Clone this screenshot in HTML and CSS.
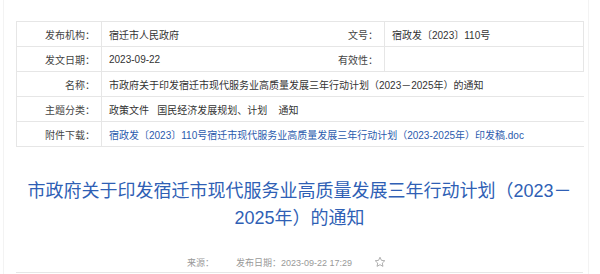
FILE: index.html
```html
<!DOCTYPE html>
<html lang="zh-CN">
<head>
    <meta charset="UTF-8">
    <meta name="viewport" content="width=device-width, initial-scale=1.0">
    <title>市政府关于印发宿迁市现代服务业高质量发展三年行动计划（2023－2025年）的通知</title>
    <link rel="stylesheet" href="styles.css">
</head>
<body>
    <div class="page">
        <table class="info">
            <colgroup>
                <col class="col-label">
                <col class="col-value">
                <col class="col-label2">
                <col class="col-value2">
            </colgroup>
            <tr>
                <th>发布机构：</th>
                <td>宿迁市人民政府</td>
                <th class="side">文号：</th>
                <td>宿政发〔2023〕110号</td>
            </tr>
            <tr>
                <th>发文日期：</th>
                <td>2023-09-22</td>
                <th class="side">有效性：</th>
                <td></td>
            </tr>
            <tr>
                <th>名称：</th>
                <td colspan="3">市政府关于印发宿迁市现代服务业高质量发展三年行动计划（2023－2025年）的通知</td>
            </tr>
            <tr>
                <th>主题分类：</th>
                <td colspan="3">政策文件&nbsp;&nbsp;&nbsp;国民经济发展规划、计划&nbsp;&nbsp;&nbsp;&nbsp;通知</td>
            </tr>
            <tr>
                <th>附件下载：</th>
                <td colspan="3"><a href="#">宿政发〔2023〕110号宿迁市现代服务业高质量发展三年行动计划（2023-2025年）印发稿.doc</a></td>
            </tr>
        </table>

        <h1 class="title">市政府关于印发宿迁市现代服务业高质量发展三年行动计划（2023－2025年）的通知</h1>

        <div class="meta">
            <span class="source">来源：</span>
            <span class="date">发布日期：2023-09-22 17:29</span>
            <svg class="star" width="12" height="12" viewBox="0 0 24 24">
                <path d="M12 2.5l2.9 6.2 6.6.8-4.9 4.6 1.3 6.6L12 17.4l-5.9 3.3 1.3-6.6-4.9-4.6 6.6-.8z" fill="none" stroke="#9a9a9a" stroke-width="1.6" stroke-linejoin="round"/>
            </svg>
        </div>
    </div>
</body>
</html>
```

FILE: styles.css
```css
body {
    margin: 0;
    padding: 0;
    background-color: #fff;
    font-family: "Liberation Sans", "Noto Sans CJK SC", sans-serif;
    color: #333;
}

.page {
    margin-left: 3px;
    width: 586px;
    height: 274px;
    border-left: 1px solid #f3f3f3;
    border-right: 1px solid #f3f3f3;
    padding: 21px 5px 0 12px;
    box-sizing: border-box;
    overflow: hidden;
}

.info {
    width: 568px;
    border-collapse: collapse;
    table-layout: fixed;
    font-size: 10px;
}

.col-label {
    width: 85px;
}

.col-label2 {
    width: 90px;
}

.col-value2 {
    width: 199px;
}

.info th,
.info td {
    height: 24px;
    padding: 0;
    border: 1px solid #e6e6e6;
    white-space: nowrap;
    overflow: hidden;
}

.info th {
    font-weight: normal;
    text-align: right;
    padding-right: 6px;
    color: #444;
}

.info td {
    padding-left: 7px;
    color: #333;
}

.info .side {
    border-left: none;
    padding-right: 6px;
}

.info tr > td:nth-child(2) {
    border-right: none;
}

.info a {
    color: #2b5bad;
    text-decoration: none;
}

.title {
    margin: 31px 0 0 0;
    font-size: 18px;
    font-weight: normal;
    line-height: 27px;
    text-align: center;
    color: #2f5fb5;
    padding: 0 8px 0 8px;
}

.meta {
    margin-top: 20px;
    height: 20px;
    display: flex;
    align-items: center;
    padding-left: 171px;
    font-size: 9px;
    color: #999;
    border-bottom: 1px solid #e6e6e6;
}

.source {
    margin-right: 22px;
}

.date {
    margin-right: 22px;
}

.star {
    display: block;
}
```
